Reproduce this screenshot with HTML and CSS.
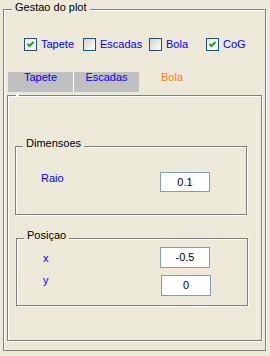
FILE: index.html
```html
<!DOCTYPE html>
<html lang="pt">
<head>
    <meta charset="UTF-8">
    <meta name="viewport" content="width=device-width, initial-scale=1.0">
    <title>Gestao do plot</title>
    <link rel="stylesheet" href="styles.css">
</head>
<body>

    <div class="plot-group">
        <span class="group-title">Gestao do plot</span>

        <div class="check-row">
            <label class="check">
                <span class="box">
                    <svg width="11" height="11" viewBox="0 0 11 11"><path d="M2.5 5 L4.5 7 L8.5 3" fill="none" stroke="#21a121" stroke-width="2"/></svg>
                </span>
                Tapete
            </label>
            <label class="check">
                <span class="box empty"></span>
                Escadas
            </label>
            <label class="check">
                <span class="box empty"></span>
                Bola
            </label>
            <label class="check">
                <span class="box">
                    <svg width="11" height="11" viewBox="0 0 11 11"><path d="M2.5 5 L4.5 7 L8.5 3" fill="none" stroke="#21a121" stroke-width="2"/></svg>
                </span>
                CoG
            </label>
        </div>

        <div class="tabs">
            <div class="tab first">Tapete</div>
            <div class="tab">Escadas</div>
            <div class="tab active">Bola</div>
        </div>

        <div class="tab-panel">
            <div class="group dims">
                <span class="group-title">Dimensoes</span>
                <div class="field-row">
                    <span class="field-label">Raio</span>
                    <div class="field">0.1</div>
                </div>
            </div>

            <div class="group pos">
                <span class="group-title">Posiçao</span>
                <div class="field-row row-x">
                    <span class="field-label">x</span>
                    <div class="field tall">-0.5</div>
                </div>
                <div class="field-row row-y">
                    <span class="field-label">y</span>
                    <div class="field tall">0</div>
                </div>
            </div>
        </div>
    </div>

</body>
</html>
```

FILE: styles.css
```css
body {
    font-family: 'Liberation Sans', Arial, sans-serif;
    font-size: 11px;
    line-height: 13px;
    margin: 0;
    padding: 9px 0 0 3px;
    background-color: #ece9d8;
    color: #000;
}

/* etched frame: grey line with a white line beside it */
.plot-group,
.tab-panel,
.group {
    position: relative;
    box-sizing: border-box;
    border: 1px solid #808080;
    box-shadow: inset 1px 1px 0 #fff, 1px 1px 0 #fff;
}

.plot-group {
    width: 263px;
    height: 342px;
}

.group-title {
    position: absolute;
    top: -10px;
    left: 7px;
    padding: 0 3px;
    background-color: #ece9d8;
    white-space: nowrap;
}

.plot-group > .group-title {
    top: -9px;
    left: 8px;
}

.check-row {
    display: grid;
    grid-template-columns: 59px 66px 57px auto;
    margin-top: 28px;
    padding-left: 20px;
    height: 13px;
}

.check {
    display: flex;
    align-items: center;
    gap: 4px;
    color: #0000ff;
}

.box {
    box-sizing: border-box;
    width: 13px;
    height: 13px;
    border: 1px solid #1c5180;
    background: linear-gradient(135deg, #e6e6e0, #ffffff);
    display: flex;
    align-items: center;
    justify-content: center;
}

.box.empty {
    background: linear-gradient(135deg, #d2d2cc, #ffffff);
}

.box svg {
    display: block;
}

.tabs {
    display: flex;
    margin: 21px 0 0 4px;
    height: 20px;
}

.tab {
    width: 65px;
    height: 20px;
    line-height: 11px;
    text-align: center;
    color: #0000ff;
    background-color: #c0c0c0;
}

.tab.first {
    border-right: 1px solid #fff;
}

.tab.active {
    width: 66px;
    color: #ff8000;
    background-color: transparent;
}

.tab-panel {
    width: 255px;
    height: 246px;
    margin: 3px 0 0 3px;
}

.tab-panel::before {
    content: "";
    position: absolute;
    top: -2px;
    left: 8px;
    width: 3px;
    height: 2px;
    background-color: #fff;
}

.group {
    width: 232px;
}

.dims {
    height: 69px;
    margin: 50px 0 0 7px;
}

.pos {
    height: 68px;
    margin: 23px 0 0 8px;
}

.field-row {
    display: flex;
    align-items: flex-start;
}

.field-label {
    color: #0000ff;
}

.dims .field-row {
    margin: 25px 0 0 25px;
}

.dims .field-label {
    width: 119px;
}

.row-x {
    margin: 8px 0 0 26px;
}

.row-x .field-label {
    width: 117px;
    margin-top: 5px;
}

.row-y {
    margin: 7px 0 0 26px;
}

.row-y .field-label {
    width: 118px;
    margin-top: -1px;
}

.field {
    box-sizing: border-box;
    width: 50px;
    height: 20px;
    border: 1px solid #7f9db9;
    background-color: #fff;
    display: flex;
    align-items: center;
    justify-content: center;
}

.field.tall {
    height: 21px;
}
```
